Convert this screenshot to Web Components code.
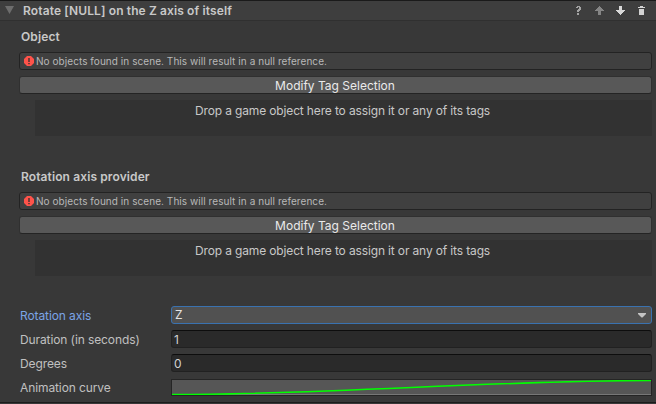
<!DOCTYPE html>
<html lang="en">
<head>
<meta charset="utf-8">
<title>Inspector</title>
<style>
html,body{margin:0;height:100%;background:#383838;overflow:hidden}
body{font:12px/18px Inter,"Liberation Sans",sans-serif;color:#c8c8c8}
</style>
</head>
<body>
<action-panel></action-panel>
<script>
const define = (name, html) => customElements.define(name, class extends HTMLElement {
  constructor() {
    super();
    this.attachShadow({mode: "open"}).innerHTML = html.replace(/\{(\w[\w-]*)\}/g, (m, k) => this.getAttribute(k) || "");
  }
});

define("fold-header", `<style>
:host{display:flex;box-sizing:border-box;height:21px;align-items:center;background:#3e3e3e;border-top:1px solid #1a1a1a;border-bottom:1px solid #303030;padding:0 7px 0 5px}
.t{flex:1;font-weight:600;letter-spacing:.12px;padding-left:9px;white-space:nowrap}
svg{display:block;flex:none}
</style>
<svg width="9" height="19" viewBox="0 0 9 19"><path d="M0 5H9L4.5 13Z" fill="#6d6d6d"/></svg>
<span class="t"><slot></slot></span>
<svg width="76" height="19" viewBox="573 1 76 19" shape-rendering="crispEdges">
<path d="M576 8V7H577V6H580V7H581V10H580V11H579V12H577V10H578V9H579V7H578V8ZM577 13H579V15H577Z" fill="#a4a4a4"/>
<path d="M599 6H600V7H601V8H602V9H603V10H604V11H601V15H598V11H595V10H596V9H597V8H598V7H599Z" fill="#858585"/>
<path d="M619 6H622V10H625V11H624V12H623V13H622V14H621V15H620V14H619V13H618V12H617V11H616V10H619Z" fill="#d8d8d8"/>
<path d="M640 6H643V7H645V8H638V7H640ZM639 9H644V15H639Z" fill="#d2d2d2"/>
</svg>`);

define("help-box", `<style>
:host{display:flex;box-sizing:border-box;height:18px;align-items:center;border:1px solid #232323;border-radius:3px;background:#404040;padding-left:4px;font-size:10px;color:#b8b8b8;letter-spacing:.06px}
svg{display:block;margin:-1px 2px 0 0}
</style><svg width="10" height="10" viewBox="0 0 10 10"><path d="M3 0H7L10 3V7L7 10H3L0 7V3Z" fill="#ff534a"/><path d="M4.3 2H5.7V6H4.3ZM4.3 7H5.7V8.3H4.3Z" fill="#40302f"/></svg><span><slot></slot></span>`);

define("flat-button", `<style>
:host{display:block;box-sizing:border-box;height:18px;border:1px solid #303030;border-bottom-color:#242424;border-radius:3px;background:#585858;color:#eaeaea;text-align:center;line-height:18px;padding-right:1px}
</style><slot></slot>`);

define("drop-area", `<style>
:host{display:block;height:36px;margin-left:16px;box-sizing:border-box;padding-right:2px;background:#323232;text-align:center;line-height:22px;letter-spacing:-.14px}
</style><slot></slot>`);

define("tag-picker", `<style>
:host{display:block;height:140px}
h2{margin:0 0 6px 2px;font-size:12px;line-height:18px;font-weight:600;letter-spacing:.11px}
flat-button{margin:6px 0}
</style><h2>{label}</h2>
<help-box>No objects found in scene. This will result in a null reference.</help-box>
<flat-button>Modify Tag Selection</flat-button>
<drop-area>Drop a game object here to assign it or any of its tags</drop-area>`);

define("field-row", `<style>
:host{display:grid;grid-template-columns:152px 1fr;height:18px;line-height:20px;color:#c0c0c0}
:host([active]){color:#7ba4e6}
span{padding-left:1px;letter-spacing:-.1px}
</style><span>{label}</span><slot></slot>`);

define("text-field", `<style>
:host{display:block;box-sizing:border-box;height:18px;border:1px solid #212121;border-top-color:#0d0d0d;border-radius:3px;background:#2a2a2a;padding-left:2px;line-height:18px;color:#d2d2d2}
</style><slot></slot>`);

define("popup-field", `<style>
:host{display:flex;box-sizing:border-box;height:18px;border:1px solid #3a72b0;border-radius:3px;background:#515151;padding:0 5px 0 3px;line-height:16px;color:#e4e4e4;justify-content:space-between}
</style><span><slot></slot></span><svg width="8" height="16" viewBox="0 0 8 16"><path d="M0 6H8V7L4.5 10.5H3.5L0 7Z" fill="#c4c4c4"/></svg>`);

define("curve-field", `<style>
:host{display:block;box-sizing:border-box;height:17px;margin-top:1px;border:1px solid #252525;background:#565656}
svg{display:block}
</style><svg width="479" height="15" viewBox="0 0 479 15"><path d="M0 14.5H479" stroke="#777"/><path d="M0 14.5C160 14.5 319 .5 479 .5" fill="none" stroke="#0f0" stroke-width="1.5"/></svg>`);

define("action-panel", `<style>
:host{display:block;box-sizing:border-box;height:403px;border-bottom:1px solid #1c1c1c}
.body{padding:7px 4px 0 19px}
.fields{display:grid;row-gap:6px;margin-top:-2px}
</style>
<fold-header>Rotate [NULL] on the Z axis of itself</fold-header>
<div class="body">
<tag-picker label="Object"></tag-picker>
<tag-picker label="Rotation axis provider"></tag-picker>
<div class="fields">
<field-row label="Rotation axis" active><popup-field>Z</popup-field></field-row>
<field-row label="Duration (in seconds)"><text-field>1</text-field></field-row>
<field-row label="Degrees"><text-field>0</text-field></field-row>
<field-row label="Animation curve"><curve-field></curve-field></field-row>
</div></div>`);
</script>
</body>
</html>
